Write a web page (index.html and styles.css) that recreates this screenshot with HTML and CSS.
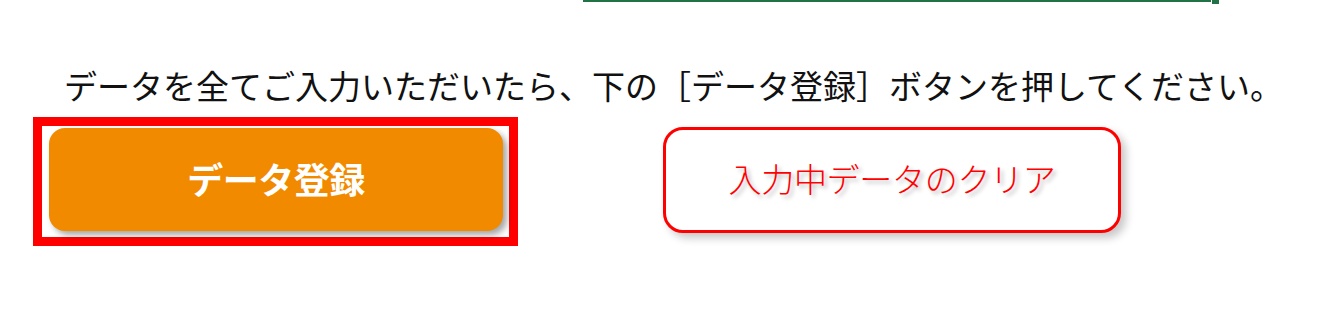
FILE: index.html
```html
<!DOCTYPE html>
<html lang="ja">
<head>
<meta charset="utf-8">
<link rel="stylesheet" href="styles.css">
</head>
<body>
<div class="topbar">
  <div class="green-line"></div>
  <div class="green-handle"></div>
</div>
<p class="notice">データを全てご入力いただいたら、下の［データ登録］ボタンを押してください。</p>
<div class="actions">
  <div class="selected-frame">
    <button class="btn-register">データ登録</button>
  </div>
  <button class="btn-clear">入力中データのクリア</button>
</div>
</body>
</html>
```

FILE: styles.css
```css
html, body {
  margin: 0;
  padding: 0;
  background: #ffffff;
  font-family: "Noto Sans CJK JP", "Noto Sans", sans-serif;
}

.topbar {
  display: flex;
  align-items: flex-start;
  padding-left: 583px;
  height: 4px;
}

.green-line {
  width: 628px;
  height: 2px;
  background: #217346;
}

.green-handle {
  width: 7px;
  height: 4px;
  margin-left: 1px;
  background: #217346;
}

.notice {
  margin: 0;
  padding: 54px 0 0 64px;
  font-size: 33px;
  line-height: 54px;
  color: #111111;
  white-space: nowrap;
  letter-spacing: 0;
}

.actions {
  display: flex;
  align-items: flex-start;
  padding: 5px 0 0 33px;
  gap: 145px;
}

.selected-frame {
  box-sizing: border-box;
  width: 485px;
  height: 129px;
  border: 9px solid #ff0000;
  background: #ffffff;
  padding: 2px 6px 6px 7px;
}

.btn-register {
  display: flex;
  align-items: center;
  justify-content: center;
  width: 454px;
  height: 103px;
  border: none;
  border-radius: 16px;
  background: #f28a00;
  color: #ffffff;
  font-family: "Noto Sans CJK JP", "Noto Sans", sans-serif;
  font-weight: 700;
  font-size: 36px;
  letter-spacing: -0.5px;
  box-shadow: 4px 4px 6px rgba(0, 0, 0, 0.35);
  padding: 0 0 4px 0;
}

.btn-clear {
  margin-top: 10px;
  display: flex;
  align-items: center;
  justify-content: center;
  width: 458px;
  height: 106px;
  border: 3px solid #ff0000;
  border-radius: 20px;
  background: #ffffff;
  color: #ff0000;
  font-family: "Noto Sans CJK JP", "Noto Sans", sans-serif;
  font-weight: 300;
  font-size: 33px;
  letter-spacing: -0.3px;
  box-shadow: 5px 5px 9px rgba(0, 0, 0, 0.22);
  text-shadow: 3px 3px 4px rgba(0, 0, 0, 0.28);
  padding: 0 0 4px 0;
}
```
